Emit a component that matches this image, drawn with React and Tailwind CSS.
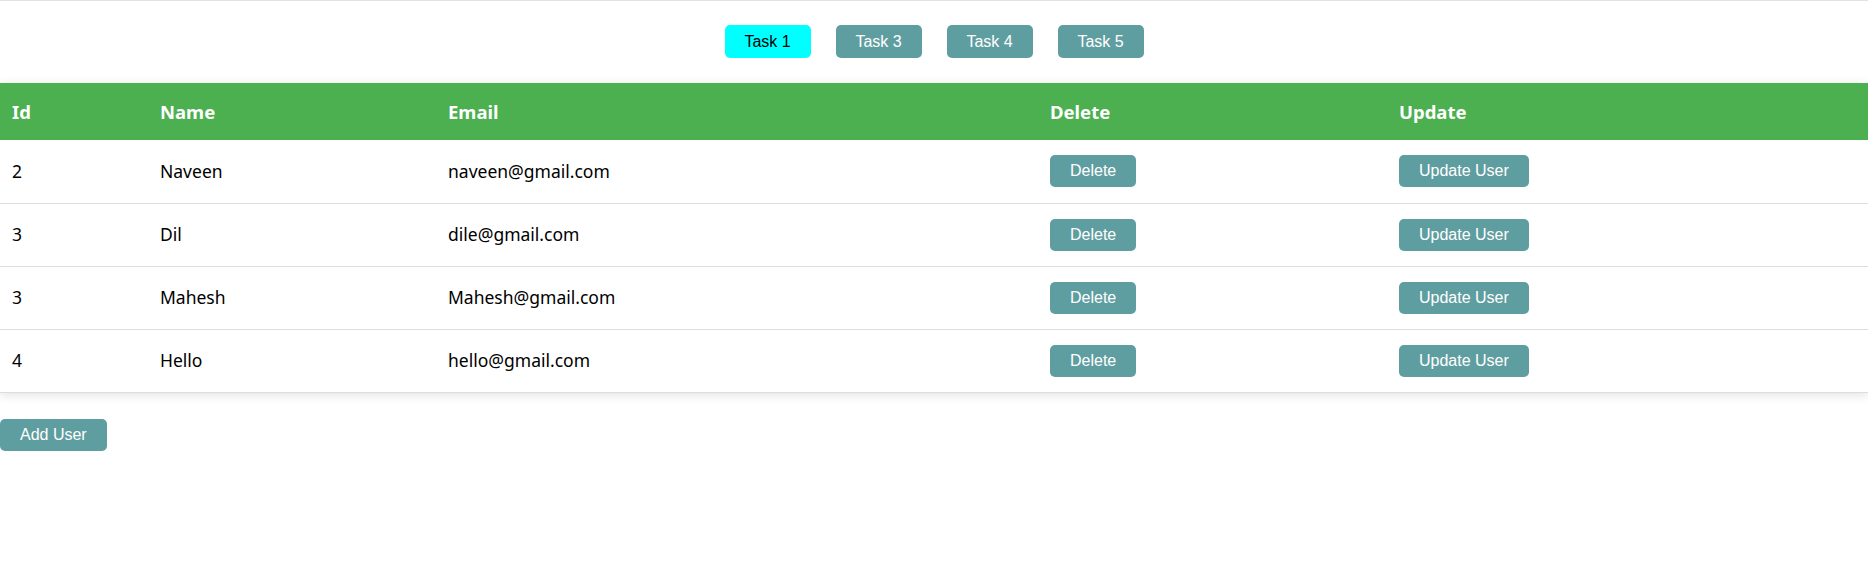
const users = [
  { id: 2, name: 'Naveen', email: 'naveen@gmail.com' },
  { id: 3, name: 'Dil', email: 'dile@gmail.com' },
  { id: 3, name: 'Mahesh', email: 'Mahesh@gmail.com' },
  { id: 4, name: 'Hello', email: 'hello@gmail.com' },
];

const tabs = ['Task 1', 'Task 3', 'Task 4', 'Task 5'];

function TealButton({ children }) {
  return (
    <button className="h-[32px] px-5 rounded-[5px] bg-[#5f9ea0] text-white text-[16px] leading-none font-['Liberation_Sans',Arial,sans-serif]">
      {children}
    </button>
  );
}

export default function App() {
  return (
    <div className="min-h-[585px] bg-white border-t border-[#e2e2e2] font-['Noto_Sans',sans-serif]">
      {/* Tabs */}
      <div className="flex justify-center gap-[25px] pt-[24px] pb-[25px]">
        {tabs.map((t, i) => (
          <button
            key={t}
            className={
              'w-[86px] h-[33px] rounded-[5px] text-[16px] leading-none font-["Liberation_Sans",Arial,sans-serif] ' +
              (i === 0 ? 'bg-[#00ffff] text-black' : 'bg-[#5f9ea0] text-white')
            }
          >
            {t}
          </button>
        ))}
      </div>

      {/* Users table */}
      <table className="w-full border-collapse shadow-[0_2px_10px_rgba(0,0,0,0.12)] text-[17.5px] text-black">
        <thead>
          <tr className="bg-[#4caf50] text-white h-[57px] text-left text-[18.5px]">
            <th className="w-[148px] px-3 font-bold">Id</th>
            <th className="w-[288px] px-3 font-bold">Name</th>
            <th className="w-[602px] px-3 font-bold">Email</th>
            <th className="w-[349px] px-3 font-bold">Delete</th>
            <th className="px-3 font-bold">Update</th>
          </tr>
        </thead>
        <tbody>
          {users.map((u, i) => (
            <tr key={i} className="h-[63px] border-b border-[#dddddd]">
              <td className="px-3">{u.id}</td>
              <td className="px-3">{u.name}</td>
              <td className="px-3">{u.email}</td>
              <td className="px-3">
                <TealButton>Delete</TealButton>
              </td>
              <td className="px-3">
                <TealButton>Update User</TealButton>
              </td>
            </tr>
          ))}
        </tbody>
      </table>

      <div className="pt-[26px]">
        <TealButton>Add User</TealButton>
      </div>
    </div>
  );
}
